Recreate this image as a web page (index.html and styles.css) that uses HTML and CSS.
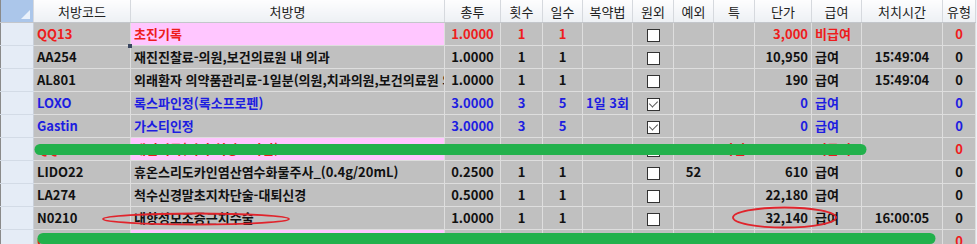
FILE: index.html
```html
<!DOCTYPE html>
<html lang="ko">
<head>
  <meta charset="UTF-8" />
  <title>처방 목록</title>
  <link rel="stylesheet" href="styles.css">
</head>
<body>
  <div class="sheet">
    <table class="grid">
      <colgroup>
        <col class="c-head"><col class="c-code"><col class="c-name"><col class="c-total">
        <col class="c-times"><col class="c-days"><col class="c-usage"><col class="c-out">
        <col class="c-ex"><col class="c-sp"><col class="c-price"><col class="c-pay">
        <col class="c-time"><col class="c-type">
      </colgroup>
      <thead>
        <tr>
          <th class="corner"><span class="tri"></span></th>
          <th>처방코드</th><th>처방명</th><th>총투</th><th>횟수</th><th>일수</th><th>복약법</th>
          <th>원외</th><th>예외</th><th>특</th><th>단가</th><th>급여</th><th>처치시간</th><th>유형</th>
        </tr>
      </thead>
      <tbody>
        <tr class="red">
          <td class="rh"></td><td class="code">QQ13</td><td class="name pink">초진기록</td>
          <td>1.0000</td><td>1</td><td>1</td><td></td><td><span class="box"></span></td>
          <td></td><td></td><td class="num">3,000</td><td class="pay">비급여</td><td></td><td>0</td>
        </tr>
        <tr>
          <td class="rh"></td><td class="code">AA254<span class="handle"></span></td><td class="name">재진진찰료-의원,보건의료원 내 의과</td>
          <td>1.0000</td><td>1</td><td>1</td><td></td><td><span class="box"></span></td>
          <td></td><td></td><td class="num">10,950</td><td class="pay">급여</td><td>15:49:04</td><td>0</td>
        </tr>
        <tr>
          <td class="rh"></td><td class="code">AL801</td><td class="name">외래환자 의약품관리료-1일분(의원,치과의원,보건의료원 외</td>
          <td>1.0000</td><td>1</td><td>1</td><td></td><td><span class="box"></span></td>
          <td></td><td></td><td class="num">190</td><td class="pay">급여</td><td>15:49:04</td><td>0</td>
        </tr>
        <tr class="blue">
          <td class="rh"></td><td class="code">LOXO</td><td class="name">록스파인정(록소프로펜)</td>
          <td>3.0000</td><td>3</td><td>5</td><td>1일 3회</td><td><span class="box checked"></span></td>
          <td></td><td></td><td class="num">0</td><td class="pay">급여</td><td></td><td>0</td>
        </tr>
        <tr class="blue">
          <td class="rh"></td><td class="code">Gastin</td><td class="name">가스티인정</td>
          <td>3.0000</td><td>3</td><td>5</td><td></td><td><span class="box checked"></span></td>
          <td></td><td></td><td class="num">0</td><td class="pay">급여</td><td></td><td>0</td>
        </tr>
        <tr class="red">
          <td class="rh"></td><td class="code">QQ20</td><td class="name pink">재진기록(기타 처방 - 야간)</td>
          <td>1.0000</td><td>1</td><td>1</td><td></td><td><span class="box"></span></td>
          <td>52</td><td>야간</td><td class="num">0</td><td class="pay">비급여</td><td></td><td>0</td>
        </tr>
        <tr>
          <td class="rh"></td><td class="code">LIDO22</td><td class="name">휴온스리도카인염산염수화물주사_(0.4g/20mL)</td>
          <td>0.2500</td><td>1</td><td>1</td><td></td><td><span class="box"></span></td>
          <td>52</td><td></td><td class="num">610</td><td class="pay">급여</td><td></td><td>0</td>
        </tr>
        <tr>
          <td class="rh"></td><td class="code">LA274</td><td class="name">척수신경말초지차단술-대퇴신경</td>
          <td>0.5000</td><td>1</td><td>1</td><td></td><td><span class="box"></span></td>
          <td></td><td></td><td class="num">22,180</td><td class="pay">급여</td><td></td><td>0</td>
        </tr>
        <tr>
          <td class="rh"></td><td class="code">N0210</td><td class="name">내향성모조증근치수술</td>
          <td>1.0000</td><td>1</td><td>1</td><td></td><td><span class="box"></span></td>
          <td></td><td></td><td class="num">32,140</td><td class="pay">급여</td><td>16:00:05</td><td>0</td>
        </tr>
        <tr class="red last">
          <td class="rh"></td><td class="code">Q</td><td class="name pink"></td>
          <td></td><td></td><td></td><td></td><td></td>
          <td></td><td></td><td></td><td></td><td></td><td>0</td>
        </tr>
      </tbody>
    </table>

    <!-- markup drawn over the grid -->
    <svg class="marks" width="977" height="244" viewBox="0 0 977 244">
      <line x1="40" y1="149.5" x2="861" y2="149.5" stroke="#22b14c" stroke-width="11" stroke-linecap="round"/>
      <line x1="43" y1="238.5" x2="930" y2="238.5" stroke="#22b14c" stroke-width="11" stroke-linecap="round"/>
      <ellipse cx="196" cy="219" rx="93" ry="5.5" fill="none" stroke="#e0242c" stroke-width="1.8"/>
      <ellipse cx="784.5" cy="217.5" rx="51.5" ry="10" fill="none" stroke="#e0242c" stroke-width="1.8"/>
    </svg>
  </div>
</body>
</html>
```

FILE: styles.css
```css
body {
  margin: 0;
  background: #eef2f8;
  font-family: "Noto Sans CJK KR", "Noto Sans", sans-serif;
}
.sheet {
  position: relative;
  width: 977px;
  height: 244px;
  overflow: hidden;
  background: #eef2f8;
}
.grid {
  border-collapse: collapse;
  table-layout: fixed;
  width: 975px;
  font-size: 13px;
}
.c-head { width: 33px; }
.c-code { width: 97px; }
.c-name { width: 314px; }
.c-total { width: 56px; }
.c-times { width: 42px; }
.c-days { width: 40px; }
.c-usage { width: 50px; }
.c-out { width: 41px; }
.c-ex { width: 40px; }
.c-sp { width: 41px; }
.c-price { width: 57px; }
.c-pay { width: 50px; }
.c-time { width: 81px; }
.c-type { width: 33px; }

th {
  height: 22px;
  padding: 0;
  font-weight: normal;
  font-size: 13px;
  color: #222;
  background: linear-gradient(#fdfdfe, #edf0f4);
  border: 1px solid #d6d9de;
  border-top: none;
  border-bottom-color: #c3c6cb;
}
th.corner {
  position: relative;
  background: #abc6ea;
  border-left: 1px solid #8a8a8a;
}
.tri {
  position: absolute;
  right: 3px;
  bottom: 3px;
  width: 0;
  height: 0;
  border-left: 9px solid transparent;
  border-bottom: 9px solid #eaf1fb;
}

td {
  height: 22px;
  padding: 0 3px;
  background: #c0c0c0;
  border: 1px solid #dedede;
  text-align: center;
  font-weight: bold;
  color: #111;
  white-space: nowrap;
  overflow: hidden;
  line-height: 16px;
}
td.rh {
  background: #e5ecf6;
  border-left: 1px solid #8a8a8a;
  border-color: #d3dbe6 #c9cfd8 #d3dbe6 #8a8a8a;
}
td.code {
  position: relative;
  text-align: left;
  overflow: visible;
}
td.name {
  text-align: left;
  text-overflow: clip;
}
td.pink { background: #ffc6ff; }
td.num { text-align: right; }
td.pay { text-align: left; }

.red td { color: #ee1c1c; }
.blue td { color: #1d1de0; }
.last td { vertical-align: top; padding-top: 3px; }

.handle {
  position: absolute;
  right: -2px;
  top: -2px;
  width: 4px;
  height: 4px;
  background: #3a4660;
}

.box {
  display: inline-block;
  position: relative;
  width: 11px;
  height: 11px;
  vertical-align: middle;
  background: #fff;
  border: 1px solid #333;
}
.box.checked::after {
  content: "";
  position: absolute;
  left: 3px;
  top: 0;
  width: 4px;
  height: 7px;
  border: solid #555;
  border-width: 0 1px 1px 0;
  transform: rotate(45deg);
}

.marks {
  position: absolute;
  left: 0;
  top: 0;
  pointer-events: none;
}
```
